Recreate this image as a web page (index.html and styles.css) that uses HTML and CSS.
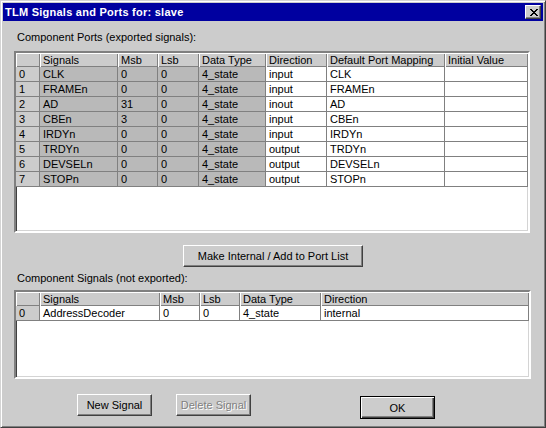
FILE: index.html
```html
<!DOCTYPE html>
<html>
<head>
<meta charset="utf-8">
<title>TLM Signals and Ports for: slave</title>
<link rel="stylesheet" href="styles.css">
</head>
<body>
<div class="dialog">
  <div class="caption">
    <span class="caption-text">TLM Signals and Ports for: slave</span>
    <button class="caption-close" title="Close">
      <svg width="8" height="7" viewBox="0 0 8 7" shape-rendering="crispEdges">
        <path d="M0 0h2v1h-2zM6 0h2v1h-2zM1 1h2v1h-2zM5 1h2v1h-2zM2 2h4v1h-4zM3 3h2v1h-2zM2 4h4v1h-4zM1 5h2v1h-2zM5 5h2v1h-2zM0 6h2v1h-2zM6 6h2v1h-2z" fill="#000"/>
      </svg>
    </button>
  </div>

  <div class="client">
    <div class="label">Component Ports (exported signals):</div>
    <div class="grid-box ports-box">
      <table class="grid">
        <colgroup>
          <col style="width:24px"><col style="width:78px"><col style="width:40px"><col style="width:41px">
          <col style="width:67px"><col style="width:61px"><col style="width:118px"><col style="width:83px">
        </colgroup>
        <tr><th></th><th>Signals</th><th>Msb</th><th>Lsb</th><th>Data Type</th><th>Direction</th><th>Default Port Mapping</th><th>Initial Value</th></tr>
        <tr><td class="rowhead">0</td><td class="ro">CLK</td><td class="ro">0</td><td class="ro">0</td><td class="ro">4_state</td><td>input</td><td>CLK</td><td></td></tr>
        <tr><td class="rowhead">1</td><td class="ro">FRAMEn</td><td class="ro">0</td><td class="ro">0</td><td class="ro">4_state</td><td>input</td><td>FRAMEn</td><td></td></tr>
        <tr><td class="rowhead">2</td><td class="ro">AD</td><td class="ro">31</td><td class="ro">0</td><td class="ro">4_state</td><td>inout</td><td>AD</td><td></td></tr>
        <tr><td class="rowhead">3</td><td class="ro">CBEn</td><td class="ro">3</td><td class="ro">0</td><td class="ro">4_state</td><td>input</td><td>CBEn</td><td></td></tr>
        <tr><td class="rowhead">4</td><td class="ro">IRDYn</td><td class="ro">0</td><td class="ro">0</td><td class="ro">4_state</td><td>input</td><td>IRDYn</td><td></td></tr>
        <tr><td class="rowhead">5</td><td class="ro">TRDYn</td><td class="ro">0</td><td class="ro">0</td><td class="ro">4_state</td><td>output</td><td>TRDYn</td><td></td></tr>
        <tr><td class="rowhead">6</td><td class="ro">DEVSELn</td><td class="ro">0</td><td class="ro">0</td><td class="ro">4_state</td><td>output</td><td>DEVSELn</td><td></td></tr>
        <tr><td class="rowhead">7</td><td class="ro">STOPn</td><td class="ro">0</td><td class="ro">0</td><td class="ro">4_state</td><td>output</td><td>STOPn</td><td></td></tr>
      </table>
    </div>

    <div class="center-row">
      <button class="btn btn-wide">Make Internal / Add to Port List</button>
    </div>

    <div class="label label-2">Component Signals (not exported):</div>
    <div class="grid-box signals-box">
      <table class="grid grid-signals">
        <colgroup>
          <col style="width:24px"><col style="width:120px"><col style="width:40px"><col style="width:40px">
          <col style="width:81px"><col style="width:208px">
        </colgroup>
        <tr><th></th><th>Signals</th><th>Msb</th><th>Lsb</th><th>Data Type</th><th>Direction</th></tr>
        <tr><td class="rowhead">0</td><td>AddressDecoder</td><td>0</td><td>0</td><td>4_state</td><td>internal</td></tr>
      </table>
    </div>

    <div class="button-row">
      <button class="btn">New Signal</button>
      <button class="btn" disabled>Delete Signal</button>
      <button class="btn btn-default">OK</button>
    </div>
  </div>
</div>
</body>
</html>
```

FILE: styles.css
```css
* { box-sizing: border-box; }
body { margin: 0; background: #fff; font: 11px "Liberation Sans", Arial, sans-serif; color: #000; }

.dialog { width: 546px; height: 428px; background: #ccc; padding: 2px; display: flex; flex-direction: column;
  border: 1px solid; border-color: #d4d4d4 #404040 #404040 #d4d4d4;
  box-shadow: inset 1px 1px #fff, inset -1px -1px #808080; }

.caption { height: 18px; background: #0000a0; display: flex; align-items: center; padding-left: 2px; }
.caption-text { color: #fff; font-weight: bold; letter-spacing: 0.25px; }
.caption-close { margin-left: auto; margin-right: 2px; width: 16px; height: 14px; padding: 0; background: #ccc;
  display: flex; align-items: center; justify-content: center;
  border: 1px solid; border-color: #fff #404040 #404040 #fff; box-shadow: inset -1px -1px #808080; }
.caption-close svg { display: block; margin-left: 1px; }

.client { flex: 1; display: flex; flex-direction: column; padding: 0 11px; }
.label { margin-top: 10px; line-height: 13px; padding-left: 3px; }
.label-2 { margin-top: 5px; }

.grid-box { width: 516px; background: #fff; overflow: hidden; margin-top: 7px;
  border: 2px solid; border-color: #808080 #fff #fff #808080;
  box-shadow: inset 1px 1px #404040, inset -1px -1px #d4d4d4; }
.ports-box { height: 182px; }
.signals-box { height: 89px; margin-top: 5px; width: 517px; }

.grid { border-collapse: separate; border-spacing: 0; table-layout: fixed; width: 512px; }
.grid-signals { width: 513px; }
.grid th { height: 14px; padding: 0 0 0 3px; line-height: 13px; background: #ccc; text-align: left; font-weight: normal;
  white-space: nowrap; overflow: hidden; box-shadow: inset 1px 1px #fff, inset -1px -1px #808080; }
.grid td { height: 15px; padding: 0 0 0 3px; line-height: 14px; white-space: nowrap; overflow: hidden;
  border-right: 1px solid #808080; border-bottom: 1px solid #808080; }
.grid td.ro { background: #b9b9b9; }
.grid td.rowhead { background: #ccc; }

.center-row { display: flex; justify-content: center; margin-top: 12px; }

.btn { width: 75px; height: 22px; padding: 0; background: #ccc; font: inherit; color: #000;
  border: 1px solid; border-color: #fff #404040 #404040 #fff; box-shadow: inset -1px -1px #808080; }
.btn-wide { width: 180px; }
.btn:disabled { color: #808080; text-shadow: 1px 1px #fff; }
.btn-default { height: 23px; margin-top: 2px; border-color: #000;
  box-shadow: inset 1px 1px #fff, inset -1px -1px #404040, inset -2px -2px #808080; }

.button-row { display: flex; align-items: flex-start; gap: 24px; margin-top: 15px; padding-left: 63px; }
.button-row .btn-default { margin-left: 85px; }
```
